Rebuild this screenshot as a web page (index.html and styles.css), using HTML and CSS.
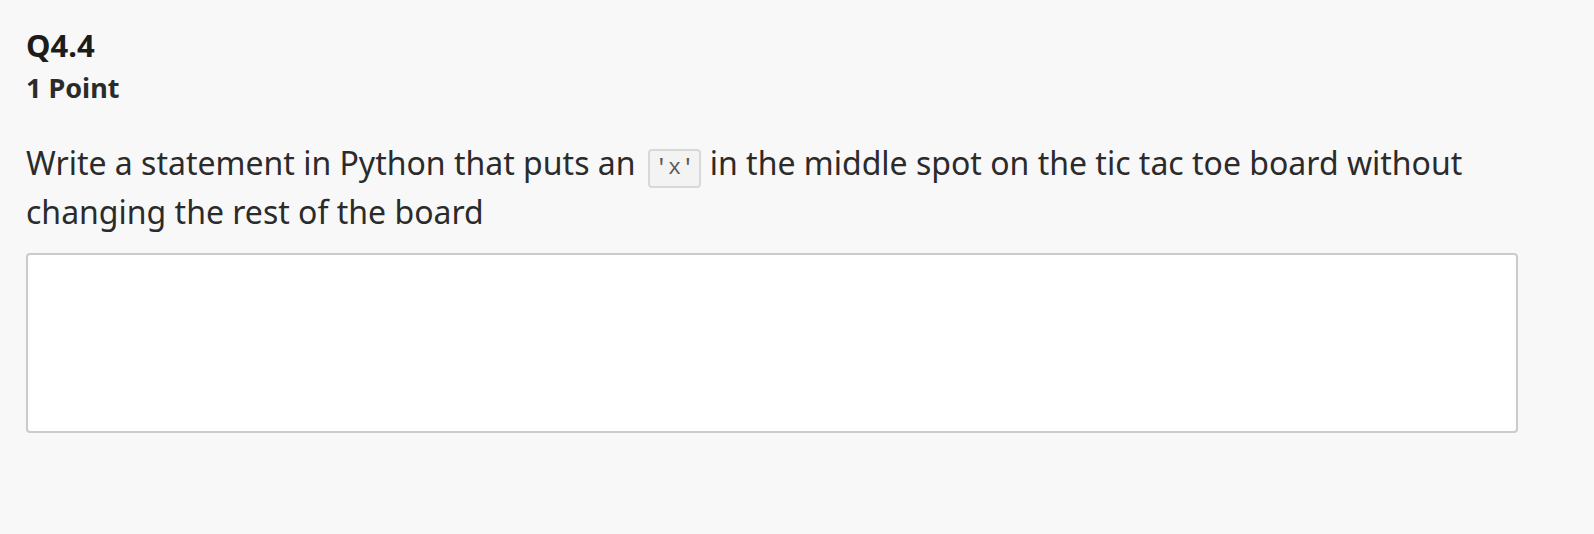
FILE: index.html
```html
<!DOCTYPE html>
<html lang="en">
<head>
<meta charset="utf-8">
<title>Q4.4</title>
<link rel="stylesheet" href="styles.css">
</head>
<body>
<div class="question">
  <div class="question-title">Q4.4</div>
  <div class="question-points">1 Point</div>
  <p class="question-prompt">Write a statement in Python that puts an <code class="inline-code">'x'</code> in the middle spot on the tic tac toe board without changing the rest of the board</p>
  <textarea class="answer-box" aria-label="Answer"></textarea>
</div>
</body>
</html>
```

FILE: styles.css
```css
html, body {
  margin: 0;
  padding: 0;
  background: #f8f8f8;
}

body {
  font-family: "Noto Sans", "Open Sans", sans-serif;
  color: #2b2b2b;
}

.question {
  padding: 25px 76px 0 26px;
}

.question-title {
  font-size: 31px;
  font-weight: 700;
  line-height: 40px;
  color: #1c1c1c;
}

.question-points {
  margin-top: 5px;
  font-size: 27px;
  font-weight: 700;
  line-height: 36px;
  color: #2b2b2b;
}

.question-prompt {
  margin: 33px 0 0;
  font-size: 32px;
  line-height: 47px;
}

.inline-code {
  display: inline-block;
  margin-left: 4px;
  font-family: "Liberation Mono", "DejaVu Sans Mono", monospace;
  font-size: 22px;
  line-height: 31px;
  padding: 2px 5px;
  color: #5a5a5a;
  background: #f3f3f3;
  border: 2px solid #d8d8d8;
  border-radius: 4px;
  vertical-align: 1px;
}

.answer-box {
  display: block;
  box-sizing: border-box;
  width: 100%;
  height: 180px;
  margin-top: 18px;
  padding: 10px;
  border: 2px solid #cbcbcb;
  border-radius: 4px;
  background: #fff;
  resize: none;
  font-family: "Noto Sans", sans-serif;
  font-size: 22px;
}
```
